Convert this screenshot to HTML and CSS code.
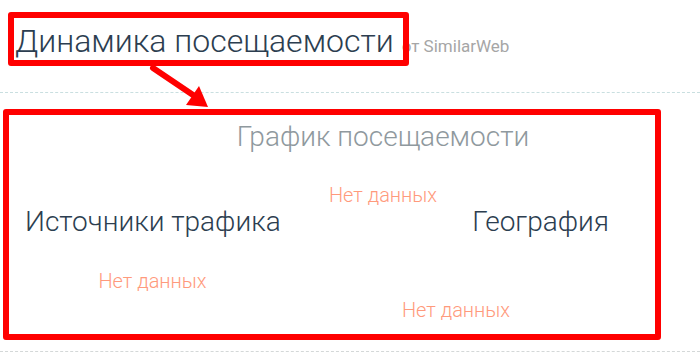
FILE: index.html
```html
<!DOCTYPE html>
<html lang="ru">
<head>
    <meta charset="UTF-8">
    <title>Динамика посещаемости</title>
    <meta name="viewport" content="width=device-width, initial-scale=1">
    <link rel="stylesheet" href="styles.css">
</head>
<body>
    <div class="header">
        <h2 class="title">Динамика посещаемости</h2>
        <span class="source">от SimilarWeb</span>
    </div>

    <div class="stats">
        <div class="chart">
            <div class="chart-title">График посещаемости</div>
            <div class="no-data">Нет данных</div>
        </div>
        <div class="cols">
            <div class="col col-left">
                <div class="col-title">Источники трафика</div>
                <div class="no-data">Нет данных</div>
            </div>
            <div class="col col-right">
                <div class="col-title">География</div>
                <div class="no-data">Нет данных</div>
            </div>
        </div>
    </div>

    <!-- пометки поверх скриншота -->
    <div class="mark mark-title"></div>
    <div class="mark mark-block"></div>
    <svg class="arrow" width="80" height="60" viewBox="0 0 80 60">
        <line x1="13" y1="8" x2="56" y2="37" stroke="#ff0000" stroke-width="6" stroke-linecap="round"/>
        <polygon points="68,47 46,45 59,26" fill="#ff0000"/>
    </svg>
</body>
</html>
```

FILE: styles.css
```css
body {
    font-family: Roboto, "Liberation Sans", sans-serif;
    background-color: #fff;
    margin: 0;
    padding: 0;
    color: #333;
    position: relative;
    height: 352px;
    overflow: hidden;
}
.header {
    padding: 21px 0 31px 15px;
    height: 40px;
    display: flex;
    align-items: baseline;
    border-bottom: 1px dashed #c9dfe0;
}
.title {
    margin: 0;
    font-size: 32px;
    line-height: 40px;
    font-weight: 300;
    color: #2c3e50;
}
.source {
    margin-left: 8px;
    font-size: 17px;
    color: #a6a6a6;
}
.stats {
    padding-top: 28px;
    height: 230px;
    border-bottom: 1px dashed #d4d8d8;
}
.chart {
    padding-left: 66px;
    text-align: center;
}
.chart-title {
    font-size: 28px;
    line-height: 32px;
    font-weight: 300;
    color: #8f999e;
}
.chart .no-data {
    margin-top: 31px;
}
.no-data {
    font-size: 20px;
    line-height: 22px;
    font-weight: 300;
    color: #ff9a7c;
    white-space: nowrap;
}
.cols {
    display: grid;
    grid-template-columns: 255px 306px;
    column-gap: 23px;
    padding-left: 25px;
}
.col {
    text-align: center;
}
.col-title {
    font-size: 28px;
    line-height: 32px;
    font-weight: 300;
    color: #2c3e50;
    white-space: nowrap;
}
.col-left .col-title {
    text-align: left;
}
.col-right .col-title {
    text-align: right;
}
.col-left .no-data {
    margin-top: 32px;
}
.col-right .no-data {
    margin-top: 61px;
}
.mark {
    position: absolute;
    border: 6px solid #ff0000;
    border-radius: 3px;
    box-sizing: border-box;
}
.mark-title {
    left: 8px;
    top: 12px;
    width: 401px;
    height: 54px;
}
.mark-block {
    left: 3px;
    top: 109px;
    width: 658px;
    height: 231px;
}
.arrow {
    position: absolute;
    left: 140px;
    top: 60px;
}
```
